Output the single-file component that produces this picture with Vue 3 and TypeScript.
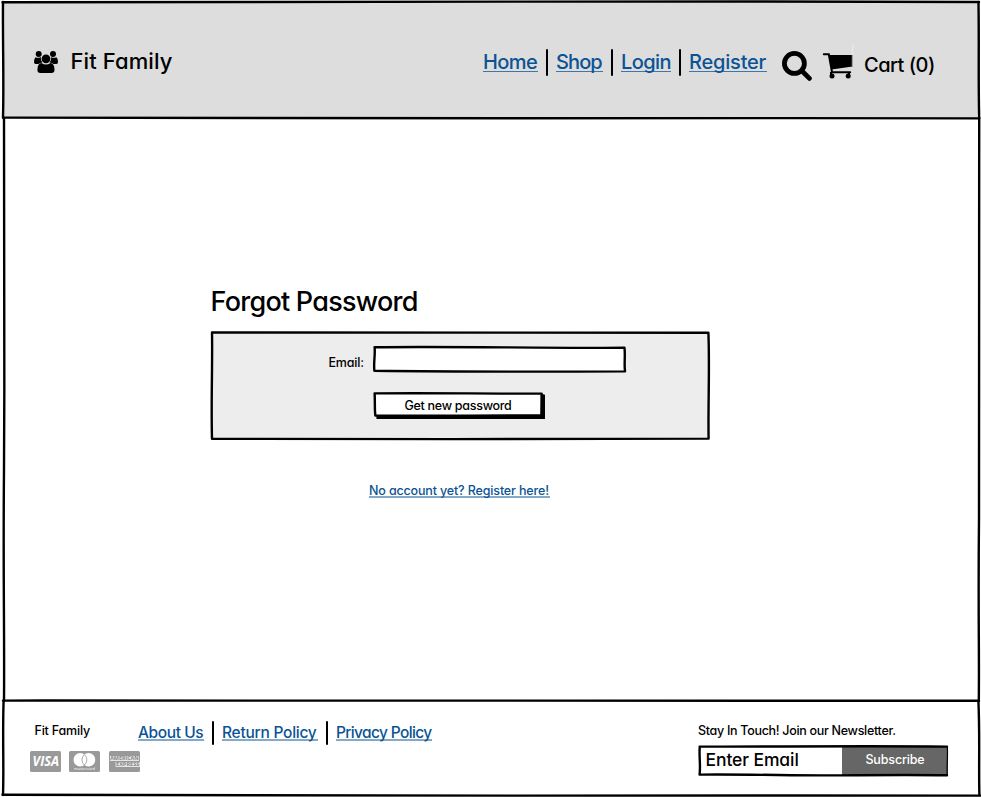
<script setup lang="ts">
interface NavLink {
  label: string
  cls: string
}

const mainLinks: NavLink[] = [
  { label: 'Home', cls: 'home' },
  { label: 'Shop', cls: 'shop' },
  { label: 'Login', cls: 'login' },
  { label: 'Register', cls: 'register' },
]

const footerLinks: NavLink[] = [
  { label: 'About Us', cls: 'about' },
  { label: 'Return Policy', cls: 'returns' },
  { label: 'Privacy Policy', cls: 'privacy' },
]
</script>

<template>
  <div class="page">
    <header class="header">
      <svg class="sketch" viewBox="0 0 981 118" aria-hidden="true">
        <path class="fill-header" d="M3.5 2.5 L978.5 2 L978.5 118 L3.5 117.5Z" />
        <path d="M2.5 2.2 C180 1.6 340 2.4 520 1.6 S800 2 979 2" />
        <path d="M3 2 C2.6 40 4 80 3 117.5" />
        <path d="M978.5 2 C979.2 50 978.2 80 979.2 118" />
        <path d="M3 117.6 C180 118.8 350 118.6 520 118.3 S820 118 979 118.4" />
      </svg>
      <div class="brand">
        <svg class="people" viewBox="0 0 24 22" aria-hidden="true">
          <circle cx="4.7" cy="3" r="3" />
          <circle cx="19" cy="3" r="3" />
          <path d="M1.6 6.2 Q4 7.6 6.8 6 Q6.4 9.6 8.4 11.6 Q5.6 11.8 4.6 13 H1.6 Q0 13 0 11 Q0 7.4 1.6 6.2Z" />
          <path d="M22.4 6.2 Q20 7.6 17.2 6 Q17.6 9.6 15.6 11.6 Q18.4 11.8 19.4 13 H22.4 Q24 13 24 11 Q24 7.4 22.4 6.2Z" />
          <circle cx="12" cy="7.8" r="4.4" />
          <path d="M7.4 12 Q12 15.2 16.5 12 Q20.5 12.4 20.5 19 Q20.5 22 17.5 22 H6.4 Q3.4 22 3.4 19 Q3.4 12.4 7.4 12Z" />
        </svg>
        <span class="brand-name">Fit Family</span>
      </div>
      <nav class="nav">
        <template v-for="(link, i) in mainLinks" :key="link.label">
          <i v-if="i > 0" class="bar"></i>
          <a class="nav-link" :class="link.cls" href="#">{{ link.label }}</a>
        </template>
      </nav>
      <svg class="search" viewBox="0 0 30 30" aria-hidden="true">
        <circle cx="12.4" cy="12.4" r="10" />
        <path d="M20 20 L27.4 27.4" />
      </svg>
      <svg class="cart" viewBox="0 0 30 26" aria-hidden="true">
        <path class="cart-body" d="M6 2 L29.5 2 L29.5 13.5 L8.5 16.5Z" />
        <path class="cart-line" d="M.8 1.3 H5.8 L9 19.3 H27.2" />
        <path class="cart-leg" d="M8 19 V22 M26 19 V22" />
        <circle cx="9" cy="22.9" r="2.5" />
        <circle cx="25.2" cy="22.9" r="2.5" />
        <path class="cart-glint" d="M29.7 -9 L29.2 13" />
      </svg>
      <span class="cart-text">Cart (0)</span>
    </header>

    <main class="main">
      <svg class="sketch" viewBox="0 0 981 583" aria-hidden="true">
        <path d="M4 0 C3.4 150 5 240 4 350 S4.6 510 4 583" />
        <path d="M979.2 0 C978.2 170 980 300 979 400 S979.4 530 978.8 583" />
      </svg>
      <section class="content">
        <h1 class="title">Forgot Password</h1>
        <form class="panel" @submit.prevent>
          <svg class="sketch" viewBox="0 0 500 110" aria-hidden="true">
            <path class="fill-panel" d="M2 1.4 C120 .8 250 2 498.4 1.8 C499.8 35 498 75 498.6 107.6 C330 107.8 170 108.6 2 107.8 C1 70 2.6 35 2 1.4Z" />
          </svg>
          <label class="email-label" for="email">Email:</label>
          <div class="email-box">
            <svg class="sketch" viewBox="0 0 254 28" aria-hidden="true">
              <path class="fill-white" d="M1.6 1.2 C80 .2 160 2.2 251.5 1.8 C252.4 10 251 18 252 25.4 C160 25.8 100 26 1.4 24.8 C.4 17 2.4 9 1.6 1.2Z" />
            </svg>
            <input id="email" class="email-input" type="text" />
          </div>
          <button class="submit" type="submit">
            <svg class="sketch" viewBox="0 0 173 28" aria-hidden="true">
              <path class="shadow" d="M4 23 L168 23 L168 2.6 L171.4 3 L171.4 26.4 L4 26.4Z" />
              <path class="fill-white" d="M1.6 1.4 C60 .8 110 1.8 168.6 1.6 L168.4 23.4 C110 23.2 60 24.2 2.4 23.6 C1.4 17 2.2 9 1.6 1.4Z" />
            </svg>
            <span class="submit-text">Get new password</span>
          </button>
        </form>
        <a class="register-here" href="#">No account yet? Register here!</a>
      </section>
    </main>

    <footer class="footer">
      <svg class="sketch" viewBox="0 0 981 96" aria-hidden="true">
        <path d="M3 -.4 C350 -1 700 .6 979 -.2" />
        <path d="M3.6 0 C2.4 35 4 65 3 94" />
        <path d="M978.4 0 C980 35 978.6 65 979.4 94" />
        <path d="M2.5 93.8 C180 95.2 350 94 520 94.6 S820 94 980 94.6" />
      </svg>
      <div class="company">
        <span class="company-name">Fit Family</span>
        <div class="cards">
          <svg class="card" viewBox="0 0 31 21" aria-label="Visa">
            <rect width="31" height="21" rx="1.5" />
            <text class="visa" x="2.6" y="15.3" textLength="26.5" lengthAdjust="spacingAndGlyphs">VISA</text>
          </svg>
          <svg class="card" viewBox="0 0 31 21" aria-label="Mastercard">
            <rect width="31" height="21" rx="1.5" />
            <circle class="solid" cx="11.2" cy="8.8" r="6.7" />
            <circle class="solid" cx="19.6" cy="8.8" r="6.7" />
            <path class="lens" d="M15.4 3.6 A6.7 6.7 0 0 1 15.4 14 A6.7 6.7 0 0 1 15.4 3.6Z" />
            <text class="tiny" x="5" y="19.2" textLength="21" lengthAdjust="spacingAndGlyphs">mastercard</text>
          </svg>
          <svg class="card" viewBox="0 0 31 21" aria-label="American Express">
            <rect width="31" height="21" rx="1.5" />
            <path class="plate" d="M1 5 H30 V10 H1Z M6.5 11 H31 V16 H6.5Z" />
            <text class="amex" x="1.2" y="9.3" textLength="28.4" lengthAdjust="spacingAndGlyphs">AMERICAN</text>
            <text class="amex" x="7" y="15.3" textLength="23.4" lengthAdjust="spacingAndGlyphs">EXPRESS</text>
          </svg>
        </div>
      </div>
      <nav class="footer-nav">
        <template v-for="(link, i) in footerLinks" :key="link.label">
          <i v-if="i > 0" class="bar"></i>
          <a class="footer-link" :class="link.cls" href="#">{{ link.label }}</a>
        </template>
      </nav>
      <div class="newsletter">
        <span class="newsletter-text">Stay In Touch! Join our Newsletter.</span>
        <div class="subscribe-box">
          <span class="placeholder">Enter Email</span>
          <button class="subscribe" type="button">Subscribe</button>
          <svg class="sketch" viewBox="0 0 251 32" aria-hidden="true">
            <path d="M1.6 1.6 C60 2 150 .6 249 1.6 M1.8 1.6 C.8 10 2.8 20 1.6 29.6 C60 29.2 90 30.6 130 30.4 S200 29.6 249 30.2" />
            <path class="thin" d="M249.4 2 C249.8 12 248.8 20 249.2 30" />
          </svg>
        </div>
      </div>
    </footer>
  </div>
</template>

<style>
body {
  margin: 0;
  background: #fff;
}
</style>

<style scoped>
.page {
  width: 981px;
  height: 797px;
  overflow: hidden;
  display: flex;
  flex-direction: column;
  color: #000;
  font-family: Inter, "Liberation Sans", sans-serif;
  font-feature-settings: "cv11" 1;
  font-weight: 480;
  background: #fff;
}
.page * {
  box-sizing: border-box;
}
.header,
.main,
.footer,
.panel,
.email-box,
.submit,
.subscribe-box {
  position: relative;
}
.sketch {
  position: absolute;
  inset: 0;
  width: 100%;
  height: 100%;
  overflow: visible;
  fill: none;
  stroke: #000;
  stroke-width: 2.4;
  stroke-linecap: round;
  stroke-linejoin: round;
  pointer-events: none;
}
.sketch .fill-header { fill: #ddd; stroke: none; }
.sketch .fill-panel { fill: #ededed; }
.sketch .fill-white { fill: #fff; }
.sketch .shadow { fill: #000; stroke-width: 1.2; }
.sketch .thin { stroke-width: 1.2; }
.header > *:not(.sketch),
.footer > *:not(.sketch) {
  position: relative;
}
span,
a,
label {
  white-space: nowrap;
}
a {
  color: #0b5394;
  text-decoration: none;
}

.header {
  flex: 0 0 118px;
  display: flex;
  align-items: flex-start;
  padding-left: 34px;
  z-index: 1;
}
.brand {
  display: flex;
  width: 449px;
}
.people {
  width: 24px;
  height: 22px;
  margin: 51px 12.5px 0 0;
}
.brand-name {
  margin-top: 47px;
  font-size: 22px;
  line-height: 28px;
  letter-spacing: .1px;
}
.nav {
  display: flex;
  margin-top: 49px;
  width: 299px;
}
.bar {
  width: 2px;
  height: 27px;
  margin: 0 8px;
  border-radius: 1px;
  background: #000;
  flex: none;
}
.nav-link {
  height: 23px;
  border-bottom: 1px solid #3d76a9;
  font-size: 20px;
  line-height: 26px;
}
.home { width: 55px; letter-spacing: -.6px; }
.shop { width: 47px; letter-spacing: -.9px; }
.login { width: 50px; letter-spacing: -.6px; }
.register { width: 78px; letter-spacing: -.2px; }
.search {
  width: 30px;
  height: 30px;
  margin: 51px 11px 0 0;
  fill: none;
  stroke: #000;
  stroke-width: 4.8;
  stroke-linecap: round;
}
.cart {
  width: 30px;
  height: 26px;
  margin: 53px 11px 0 0;
  overflow: visible;
}
.cart-line {
  fill: none;
  stroke: #000;
  stroke-width: 2;
  stroke-linecap: round;
}
.cart-leg {
  stroke: #000;
  stroke-width: 2;
}
.cart-glint {
  stroke: #fff;
  stroke-opacity: .35;
  stroke-width: 1.5;
}
.cart-text {
  margin-top: 52px;
  font-size: 20px;
  line-height: 26px;
  letter-spacing: -.5px;
}

.main {
  flex: 0 0 583px;
}
.content {
  display: flex;
  flex-direction: column;
  width: 500px;
  margin-left: 210px;
  padding-top: 166px;
}
.title {
  margin: 0;
  height: 47px;
  padding-left: .5px;
  font-size: 27px;
  line-height: 36px;
  letter-spacing: -.75px;
  font-weight: 480;
  white-space: nowrap;
}
.panel {
  width: 500px;
  height: 110px;
  display: grid;
  grid-template-columns: 163px 254px;
  grid-template-rows: 46px 28px;
  padding-top: 15px;
}
.email-label {
  position: relative;
  justify-self: end;
  margin: 7px 9px 0 0;
  font-size: 12.5px;
  line-height: 20px;
  letter-spacing: -.15px;
}
.email-box {
  width: 254px;
  height: 28px;
}
.email-input {
  position: relative;
  width: 100%;
  height: 100%;
  padding: 0 8px;
  border: 0;
  background: transparent;
  outline: none;
}
.submit {
  grid-column: 2;
  width: 173px;
  height: 28px;
  padding: 0;
  border: 0;
  background: none;
  color: #000;
  font: inherit;
  font-feature-settings: inherit;
}
.submit-text {
  position: relative;
  display: block;
  width: 169px;
  padding-left: 1px;
  font-size: 12.5px;
  line-height: 25px;
  height: 27px;
  letter-spacing: -.28px;
  text-align: center;
}
.register-here {
  align-self: flex-start;
  width: 181px;
  height: 16px;
  margin: 41px 0 0 159px;
  border-bottom: 2px solid #85a9c9;
  font-size: 12.5px;
  line-height: 17px;
  letter-spacing: -.15px;
}

.footer {
  flex: 0 0 96px;
  display: flex;
  align-items: flex-start;
  padding-left: 30px;
}
.company {
  width: 108px;
  padding-top: 20px;
}
.company-name {
  display: block;
  margin-left: 4.5px;
  font-size: 12.5px;
  line-height: 20px;
  letter-spacing: -.2px;
}
.cards {
  display: flex;
  gap: 8px;
  margin-top: 10px;
}
.card {
  flex: none;
  width: 31px;
  height: 21px;
  fill: #999;
}
.card:last-child {
  margin-left: 1px;
}
.card text {
  fill: #fff;
  font-family: "Open Sans", sans-serif;
}
.card .visa {
  font-size: 14px;
  font-weight: 700;
  font-style: italic;
}
.card .solid { fill: #fff; }
.card .lens {
  fill: #fff;
  stroke: #999;
  stroke-width: .8;
}
.card .tiny { font-size: 4px; }
.card .plate { fill: #fff; fill-opacity: .75; }
.card .amex {
  font-size: 5px;
  font-weight: 700;
  fill: #888;
}
.footer-nav {
  display: flex;
  width: 560px;
  margin-top: 20px;
}
.footer-nav .bar {
  height: 24px;
  margin: 0 8px;
}
.footer-link {
  height: 20px;
  border-bottom: 2px solid #85a9c9;
  font-size: 15.5px;
  line-height: 23px;
}
.about { width: 66px; letter-spacing: -.4px; }
.returns { width: 96px; letter-spacing: -.25px; }
.privacy { width: 96px; letter-spacing: -.65px; }
.newsletter {
  padding-top: 20px;
  width: 251px;
}
.newsletter-text {
  display: block;
  font-size: 12.5px;
  line-height: 20px;
  letter-spacing: -.3px;
}
.subscribe-box {
  display: flex;
  width: 251px;
  height: 32px;
  margin-top: 4px;
}
.placeholder {
  width: 144px;
  padding-left: 7.5px;
  font-size: 17.5px;
  line-height: 30px;
  letter-spacing: -.1px;
}
.subscribe {
  width: 106px;
  height: 30px;
  margin-top: 1px;
  padding: 0 0 3px;
  border: 0;
  background: #666;
  color: #fff;
  font: inherit;
  font-feature-settings: inherit;
  font-size: 12.5px;
  letter-spacing: -.15px;
}
</style>
